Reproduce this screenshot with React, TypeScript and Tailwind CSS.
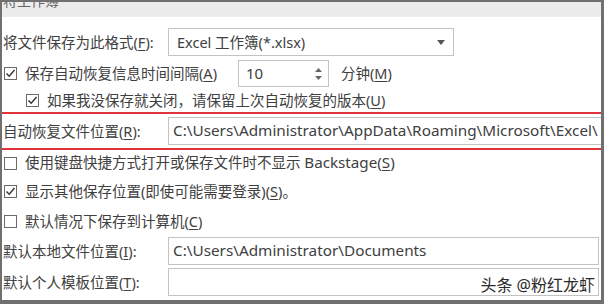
import React from "react";

const font = { fontFamily: '"Noto Sans", "Noto Sans CJK SC", sans-serif' };

function U({ c }: { c: string }) {
  return <span className="underline underline-offset-2">{c}</span>;
}

function Check({ checked }: { checked?: boolean }) {
  return (
    <div className="w-[13px] h-[13px] border border-[#6a6a6a] bg-white flex items-center justify-center shrink-0">
      {checked && (
        <svg width="11" height="11" viewBox="0 0 11 11">
          <path d="M1.5 5.5 L4.2 8.3 L9.5 2" fill="none" stroke="#333" strokeWidth="1.4" />
        </svg>
      )}
    </div>
  );
}

export default function App() {
  return (
    <div
      className="w-[604px] h-[304px] bg-[#707070] pt-[2px] pl-[2px] pr-[3px] pb-[4px] overflow-hidden"
      style={font}
    >
      <div className="relative w-full h-full bg-white overflow-hidden text-[14.5px] text-[#404040] leading-none">
        <div className="h-[15px] bg-[#ececec] overflow-hidden">
          <div className="pl-[1px] mt-[-8px] text-[14px] text-[#666]">将工作簿</div>
        </div>

        {/* Row 1 */}
        <div className="mt-[11px] h-[28px] flex items-center">
          <div className="w-[166px] pl-[1px]">
            将文件保存为此格式(<U c="F" />):
          </div>
          <div className="w-[286px] h-[28px] border border-[#c3c3c3] flex items-center pl-[8px] pr-[8px]">
            <span className="flex-1">Excel 工作簿(*.xlsx)</span>
            <svg width="8" height="5" viewBox="0 0 8 5">
              <path d="M0 0 L8 0 L4 5 Z" fill="#555" />
            </svg>
          </div>
        </div>

        {/* Row 2 */}
        <div className="mt-[4px] h-[27px] flex items-center">
          <div className="pl-[2px] pr-[8px]">
            <Check checked />
          </div>
          <div className="w-[213px]">
            保存自动恢复信息时间间隔(<U c="A" />)
          </div>
          <div className="w-[91px] h-[27px] border border-[#c3c3c3] flex items-center pl-[7px] pr-[6px]">
            <span className="flex-1 text-[15px]">10</span>
            <div className="flex flex-col gap-[4px]">
              <svg width="7" height="4" viewBox="0 0 7 4">
                <path d="M0 4 L7 4 L3.5 0 Z" fill="#666" />
              </svg>
              <svg width="7" height="4" viewBox="0 0 7 4">
                <path d="M0 0 L7 0 L3.5 4 Z" fill="#666" />
              </svg>
            </div>
          </div>
          <div className="pl-[12px]">
            分钟(<U c="M" />)
          </div>
        </div>

        {/* Row 3 */}
        <div className="h-[25px] flex items-center pt-[2px]">
          <div className="pl-[24px] pr-[8px]">
            <Check checked />
          </div>
          <div>
            如果我没保存就关闭，请保留上次自动恢复的版本(<U c="U" />)
          </div>
        </div>

        <div className="h-[2px] bg-[#e0333b]" />

        {/* Row 4 */}
        <div className="h-[34px] flex items-center">
          <div className="w-[166px] pl-[1px] shrink-0">
            自动恢复文件位置(<U c="R" />):
          </div>
          <div className="flex-1 h-[28px] border border-[#c3c3c3] border-r-0 flex items-center pl-[4px] whitespace-nowrap overflow-hidden text-[15.3px]">
            C:\Users\Administrator\AppData\Roaming\Microsoft\Excel\
          </div>
        </div>

        <div className="h-[2px] bg-[#e0333b]" />

        {/* Row 5 */}
        <div className="h-[26px] flex items-center">
          <div className="pl-[2px] pr-[8px]">
            <Check />
          </div>
          <div>
            使用键盘快捷方式打开或保存文件时不显示{" "}
            <span className="text-[15.2px]">
              Backstage(<U c="S" />)
            </span>
          </div>
        </div>

        {/* Row 6 */}
        <div className="h-[30px] flex items-center">
          <div className="pl-[2px] pr-[8px]">
            <Check checked />
          </div>
          <div>
            显示其他保存位置(即使可能需要登录)(<U c="S" />)。
          </div>
        </div>

        {/* Row 7 */}
        <div className="h-[30px] flex items-center">
          <div className="pl-[2px] pr-[8px]">
            <Check />
          </div>
          <div>
            默认情况下保存到计算机(<U c="C" />)
          </div>
        </div>

        {/* Row 8 */}
        <div className="h-[30px] flex items-center">
          <div className="w-[166px] pl-[1px] shrink-0">
            默认本地文件位置(<U c="I" />):
          </div>
          <div className="w-[431px] h-[28px] border border-[#c3c3c3] flex items-center pl-[4px] text-[15.3px]">
            C:\Users\Administrator\Documents
          </div>
        </div>

        {/* Row 9 */}
        <div className="mt-[2px] h-[28px] flex items-center">
          <div className="w-[166px] pl-[1px] shrink-0">
            默认个人模板位置(<U c="T" />):
          </div>
          <div className="w-[431px] h-[28px] border border-[#c3c3c3]" />
        </div>

        <div className="absolute right-[6px] bottom-[7px] text-[16px] text-[#2a2a2a]">
          头条 @粉红龙虾
        </div>
      </div>
    </div>
  );
}
